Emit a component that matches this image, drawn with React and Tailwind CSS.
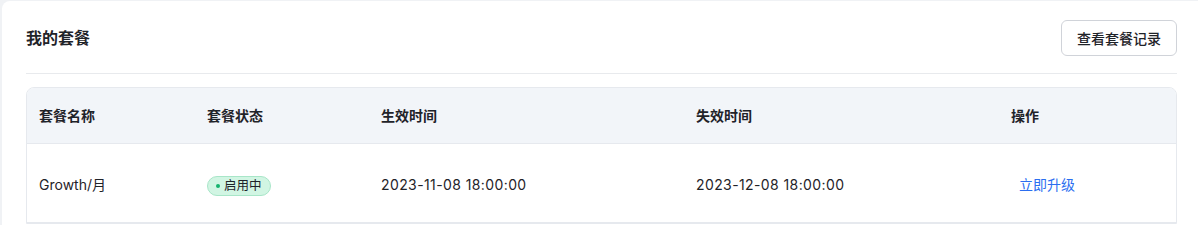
import React from 'react';

const rows = [
    { name: 'Growth/月', status: '启用中', start: '2023-11-08 18:00:00', end: '2023-12-08 18:00:00' },
];

const App = () => {
    return (
        <div className="w-[1198px] h-[225px] bg-[#f0f2f5] pl-[2px] pt-[1px] overflow-hidden" style={{ fontFamily: '"Inter", "Noto Sans CJK SC", sans-serif' }}>
            <div className="bg-white rounded-tl-lg h-[300px] w-[1210px] pl-6 pr-[33px]">
                {/* Header */}
                <div className="flex items-center justify-between w-[1151px] h-[73px] border-b border-[#e8eaed]">
                    <h2 className="text-[16px] font-semibold text-[#1f2329] pt-[2px]">我的套餐</h2>
                    <button className="h-[36px] px-[15px] border border-[#d0d3d9] rounded-md text-[14px] font-medium text-[#1f2329] bg-white mt-[2px]">
                        查看套餐记录
                    </button>
                </div>
                {/* Table */}
                <div className="mt-[13px] w-[1151px] border border-[#e6e9ee] rounded-t-lg overflow-hidden">
                    <table className="w-full table-fixed text-[14px] text-[#1f2329]">
                        <colgroup>
                            <col className="w-[168px]" />
                            <col className="w-[174px]" />
                            <col className="w-[315px]" />
                            <col className="w-[315px]" />
                            <col />
                        </colgroup>
                        <thead>
                            <tr className="bg-[#f2f5f9] h-[55px]">
                                <th className="text-left pl-3 font-semibold border-b border-[#e6e9ee]">套餐名称</th>
                                <th className="text-left pl-3 font-semibold border-b border-[#e6e9ee]">套餐状态</th>
                                <th className="text-left pl-3 font-semibold border-b border-[#e6e9ee]">生效时间</th>
                                <th className="text-left pl-3 font-semibold border-b border-[#e6e9ee]">失效时间</th>
                                <th className="text-left pl-3 font-semibold border-b border-[#e6e9ee]">操作</th>
                            </tr>
                        </thead>
                        <tbody>
                            {rows.map((r) => (
                                <tr key={r.name} className="h-[79px] border-b border-[#e6e9ee]">
                                    <td className="pl-3 pt-[3px]">{r.name}</td>
                                    <td className="pl-3 pt-[3px]">
                                        <span className="inline-flex items-center gap-[4px] h-[20px] px-[8px] rounded-full bg-[#d1f5e3] border border-[#a8e6c8] text-[12.5px] text-[#1f2329]">
                                            <span className="w-[4px] h-[4px] rounded-full bg-[#16b36e]"></span>
                                            {r.status}
                                        </span>
                                    </td>
                                    <td className="pl-3 pt-[3px] tracking-[0.4px]">{r.start}</td>
                                    <td className="pl-3 pt-[3px] tracking-[0.4px]">{r.end}</td>
                                    <td className="pl-5 pt-[3px]">
                                        <a className="text-[#2b6ef0] cursor-pointer">立即升级</a>
                                    </td>
                                </tr>
                            ))}
                        </tbody>
                    </table>
                </div>
            </div>
        </div>
    );
};

export default App;
